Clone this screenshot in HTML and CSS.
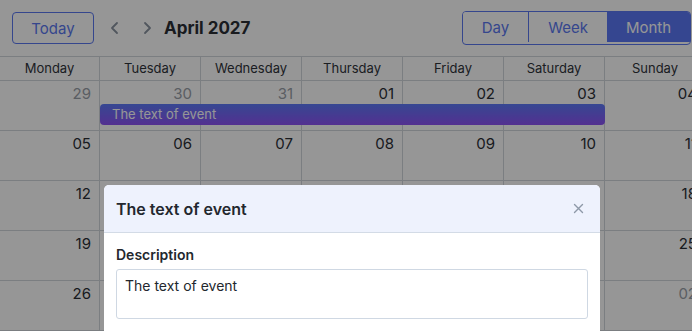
FILE: index.html
```html
<!DOCTYPE html>
<html>
<head>
<meta charset="utf-8">
<link rel="stylesheet" href="styles.css">
</head>
<body>
<div class="app">
  <div class="toolbar">
    <button class="btn-today">Today</button>
    <div class="nav">
      <span class="arrow"><svg width="12" height="14" viewBox="0 0 12 14"><path d="M8 2 L3 7 L8 12" fill="none" stroke="#8a93a0" stroke-width="1.8" stroke-linecap="round" stroke-linejoin="round"/></svg></span>
      <span class="arrow"><svg width="12" height="14" viewBox="0 0 12 14"><path d="M4 2 L9 7 L4 12" fill="none" stroke="#8a93a0" stroke-width="1.8" stroke-linecap="round" stroke-linejoin="round"/></svg></span>
    </div>
    <div class="title">April 2027</div>
    <div class="spacer"></div>
    <div class="views">
      <button class="view view-day">Day</button>
      <button class="view view-week">Week</button>
      <button class="view view-month active">Month</button>
    </div>
  </div>

  <div class="calendar">
    <div class="head">
      <div class="hcell">Monday</div>
      <div class="hcell">Tuesday</div>
      <div class="hcell">Wednesday</div>
      <div class="hcell">Thursday</div>
      <div class="hcell">Friday</div>
      <div class="hcell">Saturday</div>
      <div class="hcell">Sunday</div>
    </div>
    <div class="week">
      <div class="cell muted">29</div><div class="cell muted">30</div><div class="cell muted">31</div><div class="cell">01</div><div class="cell">02</div><div class="cell">03</div><div class="cell">04</div>
      <div class="event">The text of event</div>
    </div>
    <div class="week">
      <div class="cell">05</div><div class="cell">06</div><div class="cell">07</div><div class="cell">08</div><div class="cell">09</div><div class="cell">10</div><div class="cell">11</div>
    </div>
    <div class="week">
      <div class="cell">12</div><div class="cell">13</div><div class="cell">14</div><div class="cell">15</div><div class="cell">16</div><div class="cell">17</div><div class="cell">18</div>
    </div>
    <div class="week">
      <div class="cell">19</div><div class="cell">20</div><div class="cell">21</div><div class="cell">22</div><div class="cell">23</div><div class="cell">24</div><div class="cell">25</div>
    </div>
    <div class="week">
      <div class="cell">26</div><div class="cell">27</div><div class="cell">28</div><div class="cell">29</div><div class="cell">30</div><div class="cell muted">01</div><div class="cell muted">02</div>
    </div>
  </div>
</div>

<div class="overlay"></div>

<div class="modal">
  <div class="modal-head">
    <div class="modal-title">The text of event</div>
    <span class="close"><svg width="11" height="11" viewBox="0 0 11 11"><path d="M1.5 1.5 L9.5 9.5 M9.5 1.5 L1.5 9.5" stroke="#8e99a8" stroke-width="1.4" stroke-linecap="round"/></svg></span>
  </div>
  <div class="modal-body">
    <div class="label">Description</div>
    <div class="textarea">The text of event</div>
  </div>
</div>
</body>
</html>
```

FILE: styles.css
```css
html, body {
  margin: 0;
  padding: 0;
}
body {
  font-family: Inter, "Noto Sans", sans-serif;
  background: #fff;
  color: #2b2f36;
  width: 692px;
  height: 331px;
  overflow: hidden;
  position: relative;
}
.app {
  width: 692px;
  overflow: hidden;
}
.toolbar {
  display: flex;
  align-items: center;
  padding: 12px 1px 0 12px;
  height: 32px;
}
button {
  font-family: inherit;
  cursor: pointer;
}
.btn-today {
  width: 82px;
  height: 32px;
  border: 1px solid #5a78f0;
  border-radius: 4px;
  background: #fff;
  color: #5a78f0;
  font-size: 15px;
  padding: 0;
}
.nav {
  display: flex;
  align-items: center;
  gap: 20px;
  margin-left: 15px;
}
.arrow {
  display: flex;
  width: 12px;
  height: 14px;
}
.title {
  margin-left: 11px;
  font-size: 17px;
  font-weight: 700;
  color: #2b2f36;
}
.spacer {
  flex: 1;
}
.views {
  display: flex;
  height: 32px;
  border: 1px solid #5a78f0;
  border-radius: 4px;
  overflow: hidden;
}
.view {
  border: 0;
  background: #fff;
  color: #5a78f0;
  font-size: 15px;
  padding: 0;
  height: 30px;
}
.view-day { width: 66px; border-right: 1px solid #5a78f0; }
.view-week { width: 78px; }
.view-month { width: 83px; }
.view.active {
  background: #5a78f5;
  color: #fff;
}
.calendar {
  margin-top: 12px;
  width: 707px;
  border-top: 1px solid #d2d6dc;
}
.head, .week {
  display: grid;
  grid-template-columns: 100px repeat(6, 101px);
}
.head {
  height: 23px;
  border-bottom: 1px solid #d2d6dc;
}
.hcell {
  border-right: 1px solid #d2d6dc;
  font-size: 13px;
  text-align: center;
  line-height: 23px;
  color: #2f333a;
}
.week {
  height: 49px;
  border-bottom: 1px solid #d2d6dc;
  position: relative;
}
.cell {
  border-right: 1px solid #d2d6dc;
  text-align: right;
  padding: 4px 8px 0 0;
  font-size: 15px;
  line-height: 18px;
  color: #2b2f36;
}
.cell.muted {
  color: #9aa0a8;
}
.event {
  position: absolute;
  left: 100px;
  top: 23px;
  width: 505px;
  height: 21px;
  border-radius: 4px;
  background: linear-gradient(#5d7af8, #8e52f5);
  color: #fff;
  font-size: 13px;
  line-height: 21px;
  padding-left: 12px;
  box-sizing: border-box;
}
.overlay {
  position: absolute;
  inset: 0;
  background: rgba(0, 0, 0, 0.41);
}
.modal {
  position: absolute;
  left: 104px;
  top: 185px;
  width: 496px;
  height: 160px;
  background: #fff;
  border-radius: 5px 5px 0 0;
  overflow: hidden;
}
.modal-head {
  height: 47px;
  background: #eef2fd;
  border-bottom: 1px solid #d3dbe6;
  display: flex;
  align-items: center;
  padding: 0 16px 0 12px;
}
.modal-title {
  flex: 1;
  font-size: 16px;
  font-weight: 600;
  color: #23272e;
}
.close {
  display: flex;
  width: 11px;
  height: 11px;
}
.modal-body {
  padding: 12px 12px 0 12px;
}
.label {
  font-size: 14px;
  font-weight: 600;
  line-height: 20px;
  color: #23272e;
}
.textarea {
  margin-top: 4px;
  border: 1px solid #cfd8e3;
  border-radius: 3px;
  padding: 7px 8px;
  box-sizing: border-box;
  height: 50px;
  font-size: 14px;
  line-height: 18px;
  color: #23272e;
}
```
